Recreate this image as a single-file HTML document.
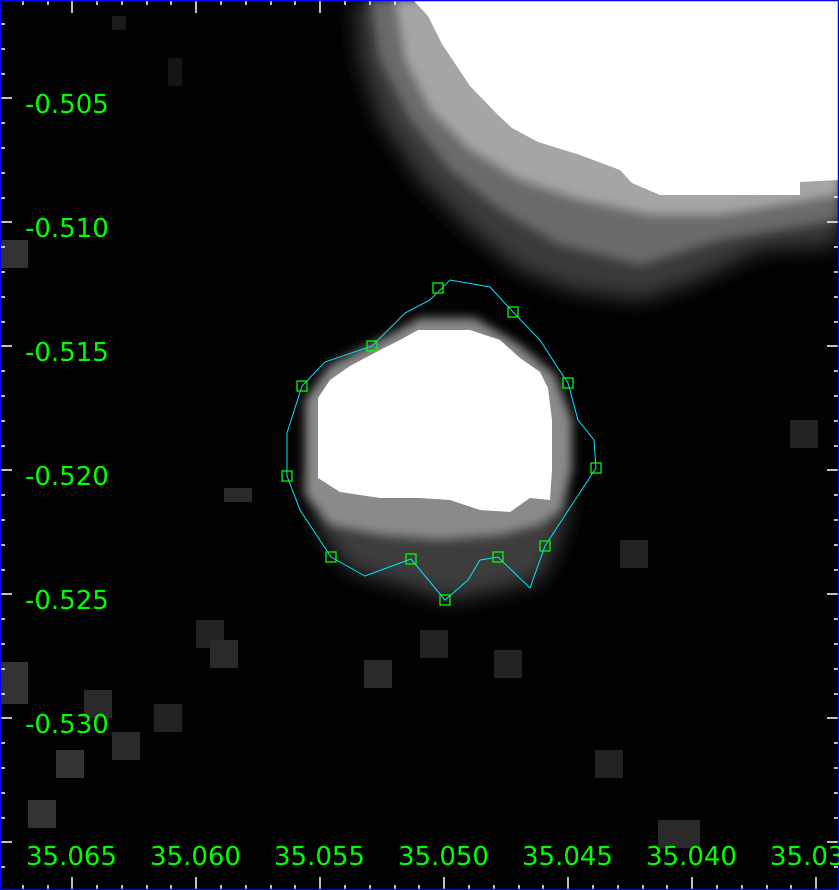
<!DOCTYPE html>
<html><head><style>
html,body{margin:0;padding:0;background:#000;}
svg{display:block;}
text{font-family:"DejaVu Sans","Liberation Sans",sans-serif;font-size:26px;fill:#00ff00;}
</style></head><body>
<svg width="839" height="890" viewBox="0 0 839 890" xmlns="http://www.w3.org/2000/svg">
<defs>
<filter id="b1" x="-50%" y="-50%" width="200%" height="200%"><feGaussianBlur stdDeviation="10"/></filter>
<filter id="b2" x="-50%" y="-50%" width="200%" height="200%"><feGaussianBlur stdDeviation="5"/></filter>
</defs>
<rect width="839" height="890" fill="#020202"/>
<!-- noise -->
<g fill="#2a2a2a">
<rect x="112" y="16" width="14" height="14" fill="#1a1a1a"/>
<rect x="168" y="58" width="14" height="28" fill="#151515"/>
<rect x="0" y="240" width="28" height="28" fill="#333"/>
<rect x="224" y="488" width="28" height="14" fill="#2a2a2a"/>
<rect x="0" y="662" width="28" height="42" fill="#333"/>
<rect x="84" y="690" width="28" height="28" fill="#2a2a2a"/>
<rect x="56" y="750" width="28" height="28" fill="#333"/>
<rect x="112" y="732" width="28" height="28" fill="#2a2a2a"/>
<rect x="154" y="704" width="28" height="28" fill="#222"/>
<rect x="28" y="800" width="28" height="28" fill="#333"/>
<rect x="196" y="620" width="28" height="28" fill="#222"/>
<rect x="210" y="640" width="28" height="28" fill="#2a2a2a"/>
<rect x="364" y="660" width="28" height="28" fill="#2a2a2a"/>
<rect x="420" y="630" width="28" height="28" fill="#222"/>
<rect x="494" y="650" width="28" height="28" fill="#222"/>
<rect x="620" y="540" width="28" height="28" fill="#222"/>
<rect x="658" y="820" width="42" height="28" fill="#2a2a2a"/>
<rect x="790" y="420" width="28" height="28" fill="#222"/>
<rect x="595" y="750" width="28" height="28" fill="#222"/>
</g>
<!-- top-right blob -->
<polygon points="355,0 360,60 380,120 420,180 470,230 520,270 570,290 640,300 700,280 760,250 839,245 839,0" fill="#3a3a3a" filter="url(#b1)"/>
<polygon points="370,0 380,60 410,120 450,170 500,210 560,245 640,265 720,240 839,220 839,0" fill="#6a6a6a" filter="url(#b2)"/>
<polygon points="395,0 405,60 430,110 470,150 520,180 580,200 650,215 720,215 839,195 839,0" fill="#a5a5a5" filter="url(#b2)"/>
<polygon points="413,0 428,16 442,44 470,86 497,114 512,128 538,142 580,155 620,170 632,183 660,195 800,195 800,182 839,180 839,0" fill="#fff"/>
<!-- central blob -->
<path d="M310,470 L320,530 L350,570 L400,585 L450,600 L500,590 L540,580 L560,540 L570,500 L540,505 L440,520 L330,500 Z" fill="#3c3c3c" filter="url(#b1)"/>
<path d="M305,400 L330,365 L380,340 L420,318 L475,318 L520,345 L555,375 L572,420 L572,470 L562,510 L540,525 L500,535 L440,540 L380,535 L330,525 L305,495 Z" fill="#8a8a8a" filter="url(#b2)"/>
<path d="M318,398 L330,380 L350,366 L380,350 L400,340 L418,330 L470,330 L500,340 L520,358 L540,372 L548,388 L552,420 L552,470 L550,500 L530,498 L510,512 L480,510 L450,500 L420,498 L380,498 L340,492 L318,478 Z" fill="#fff"/>
<!-- contour -->
<polygon points="287,433 302,386 325,362 372,346 405,313 430,300 450,280 490,287 513,312 540,340 556,365 568,383 578,420 594,440 596,468 575,500 545,546 530,588 498,557 480,560 468,580 445,600 411,559 365,576 331,557 300,510 287,476" fill="none" stroke="#00e5ff" stroke-width="1"/>
<g fill="none" stroke="#00ff00" stroke-width="1.3">
<rect x="297" y="381" width="10" height="10"/><rect x="367" y="341" width="10" height="10"/>
<rect x="433" y="283" width="10" height="10"/><rect x="508" y="307" width="10" height="10"/>
<rect x="563" y="378" width="10" height="10"/><rect x="591" y="463" width="10" height="10"/>
<rect x="540" y="541" width="10" height="10"/><rect x="493" y="552" width="10" height="10"/>
<rect x="440" y="595" width="10" height="10"/><rect x="406" y="554" width="10" height="10"/>
<rect x="326" y="552" width="10" height="10"/><rect x="282" y="471" width="10" height="10"/>
</g>
<!-- ticks -->
<g stroke="#fff" stroke-width="1.5">
<path d="M23,0v5M48,0v5M72,0v13M97,0v5M122,0v5M147,0v5M171,0v5M196,0v13M221,0v5M246,0v5M271,0v5M295,0v5M320,0v13M345,0v5M370,0v5M395,0v5"/>
<path d="M23,890v-5M48,890v-5M72,890v-13M97,890v-5M122,890v-5M147,890v-5M171,890v-5M196,890v-13M221,890v-5M246,890v-5M271,890v-5M295,890v-5M320,890v-13M345,890v-5M370,890v-5M395,890v-5M419,890v-5M444,890v-13M469,890v-5M494,890v-5M519,890v-5M543,890v-5M568,890v-13M593,890v-5M618,890v-5M643,890v-5M667,890v-5M692,890v-13M717,890v-5M742,890v-5M767,890v-5M791,890v-5M816,890v-13"/>
<path d="M0,24h5M0,49h5M0,74h5M0,98h12M0,123h5M0,148h5M0,173h5M0,198h5M0,222h12M0,247h5M0,272h5M0,297h5M0,322h5M0,346h12M0,371h5M0,396h5M0,421h5M0,446h5M0,470h12M0,495h5M0,520h5M0,545h5M0,570h5M0,594h12M0,619h5M0,644h5M0,669h5M0,694h5M0,718h12M0,743h5M0,768h5M0,793h5M0,818h5M0,842h12M0,867h5"/>
<path d="M839,197h-5M839,222h-12M839,247h-5M839,272h-5M839,297h-5M839,322h-5M839,346h-12M839,371h-5M839,396h-5M839,421h-5M839,446h-5M839,470h-12M839,495h-5M839,520h-5M839,545h-5M839,570h-5M839,594h-12M839,619h-5M839,644h-5M839,669h-5M839,694h-5M839,718h-12M839,743h-5M839,768h-5M839,793h-5M839,818h-5M839,842h-12M839,867h-5"/>
</g>
<rect x="0.5" y="0.5" width="838" height="889" fill="none" stroke="#0000ff" stroke-width="1.5"/>
<g>
<text x="25" y="113">-0.505</text><text x="25" y="237">-0.510</text><text x="25" y="361">-0.515</text>
<text x="25" y="485">-0.520</text><text x="25" y="609">-0.525</text><text x="25" y="733">-0.530</text>
<text x="26" y="865">35.065</text><text x="150" y="865">35.060</text><text x="274" y="865">35.055</text>
<text x="398" y="865">35.050</text><text x="522" y="865">35.045</text><text x="646" y="865">35.040</text><text x="770" y="865">35.035</text>
</g>
</svg>
</body></html>
